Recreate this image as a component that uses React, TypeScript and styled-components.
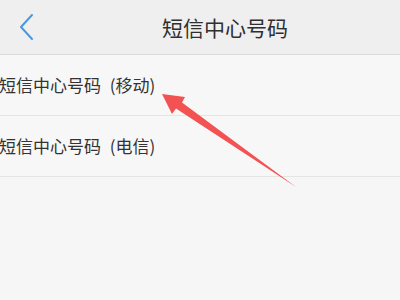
import styled, { createGlobalStyle } from "styled-components";

const GlobalStyle = createGlobalStyle`
	html, body {
		margin: 0;
		padding: 0;
		width: 400px;
		height: 300px;
		overflow: hidden;
		background: #f6f6f6;
		font-family: "Noto Sans CJK SC", "Noto Sans", sans-serif;
	}
`

const Page = styled.div`
	position: relative;
	width: 400px;
	height: 300px;
	background: #f6f6f6;
`

const Header = styled.header`
	height: 54px;
	display: flex;
	align-items: center;
	background: #efefef;
	border-bottom: 1px solid #dcdcdc;
`

const BackButton = styled.button`
	display: flex;
	align-items: center;
	margin-left: 19px;
	padding: 0;
	border: none;
	background: none;
	cursor: pointer;
`

const Title = styled.h1`
	margin: 0 0 0 127px;
	font-size: 21px;
	font-weight: 400;
	color: #2f2f2f;
	letter-spacing: 0;
`

const List = styled.ul`
	margin: 0;
	padding: 0;
	list-style: none;
`

const Row = styled.li`
	height: 60px;
	display: flex;
	align-items: center;
	border-bottom: 1px solid #e4e4e4;
	background: #f7f7f7;
`

const RowLabel = styled.span`
	margin-left: -1px;
	margin-top: -2px;
	font-size: 17px;
	color: #333;
	white-space: nowrap;
	word-spacing: 5px;
`

const Overlay = styled.svg`
	position: absolute;
	top: 0;
	left: 0;
	pointer-events: none;
`

const rows = ["短信中心号码 (移动)", "短信中心号码 (电信)"];

export default function App() {
	return (
		<Page>
			<GlobalStyle />
			<Header>
				<BackButton aria-label="返回">
					<svg width="16" height="28" viewBox="0 0 16 28">
						<polyline points="13,2 2,14 13,26" fill="none" stroke="#4a98df" strokeWidth="2" strokeLinecap="round" strokeLinejoin="round" />
					</svg>
				</BackButton>
				<Title>短信中心号码</Title>
			</Header>
			<List>
				{rows.map(label => (
					<Row key={label}>
						<RowLabel>{label}</RowLabel>
					</Row>
				))}
			</List>
			<Overlay width="400" height="300" viewBox="0 0 400 300">
				<polygon
					points="162,94 185,97 182,102.5 296,187 176,108.5 172,114"
					fill="#f25252"
					strokeLinejoin="round"
				/>
			</Overlay>
		</Page>
	);
}
